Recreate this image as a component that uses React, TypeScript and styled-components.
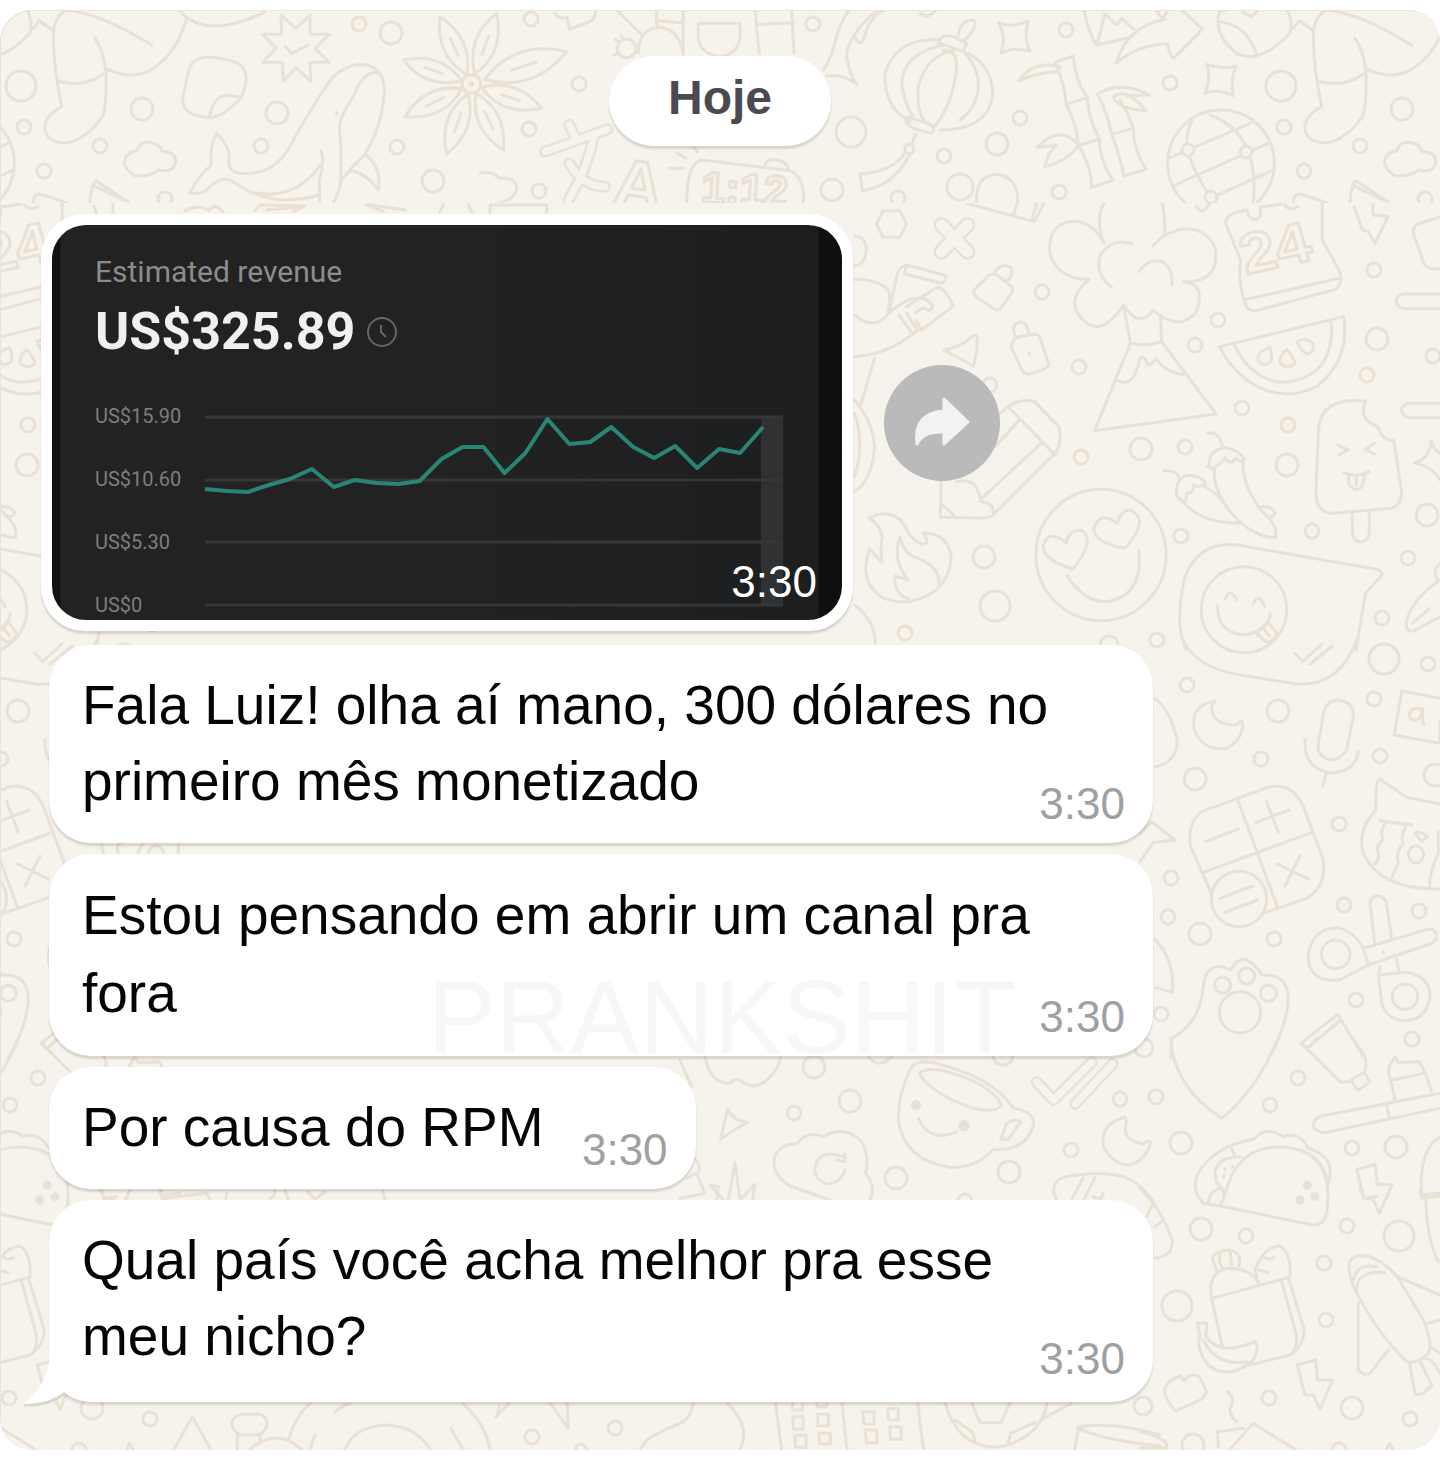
import React from "react";
import styled, { createGlobalStyle, css } from "styled-components";

const LINE = "#e9e1d4";
const PAPER = "#f6f2ec";

// [x, y, radius] of the small rings scattered between the doodles
const upperRings = [
  [21, 86, 15], [142, 109, 11], [24, 127, 7], [100, 146, 7], [44, 171, 7],
  [277, 113, 11], [261, 146, 7], [359, 24, 7], [391, 33, 11], [397, 147, 7],
  [433, 181, 11], [165, 199, 7], [531, 19, 7], [813, 24, 7], [579, 84, 7],
  [529, 129, 7], [539, 191, 7], [851, 132, 15], [944, 156, 7], [832, 190, 11],
  [898, 198, 7], [1066, 30, 7], [1170, 83, 7], [1020, 118, 7], [997, 144, 11],
  [1059, 192, 7], [960, 187, 13],
];

const lowerRings = [
  [1042, 292, 7], [1079, 367, 7], [1195, 345, 7], [1218, 320, 7], [1374, 270, 7],
  [1377, 339, 11], [1433, 356, 7], [1367, 375, 7], [1242, 408, 7], [1288, 425, 7],
  [1141, 449, 11], [1185, 447, 7], [1287, 465, 11], [1081, 457, 7], [984, 557, 11],
  [995, 606, 15], [905, 633, 7], [1181, 536, 7], [1312, 531, 7], [1427, 515, 11],
  [1408, 558, 7], [1382, 618, 7], [1157, 640, 7], [1109, 645, 9], [990, 385, 7],
  [1384, 659, 15], [1428, 664, 7], [1187, 685, 7], [1374, 699, 7], [1278, 711, 11],
  [1380, 756, 7], [1261, 759, 7], [1195, 779, 11], [1435, 775, 11], [1339, 824, 7],
  [1171, 878, 7], [1168, 917, 7], [1200, 934, 11], [1274, 939, 7], [1344, 905, 7],
  [1419, 911, 7], [1356, 1000, 7], [1161, 1014, 7], [1412, 1039, 7], [1144, 1048, 9],
  [814, 1067, 11], [850, 1101, 11], [794, 1113, 7], [1120, 1099, 7], [1156, 1097, 7],
  [1071, 1150, 7], [1009, 1172, 11], [896, 1178, 11], [965, 1201, 7], [1003, 1055, 10],
  [1298, 1078, 7], [1270, 1105, 7], [1181, 1143, 11], [1352, 1148, 7], [1396, 1147, 11],
  [1201, 1229, 11], [1246, 1236, 7], [1347, 1226, 7], [1399, 1236, 15], [1324, 1263, 7],
  [1177, 1306, 15], [1326, 1320, 7], [1269, 1398, 7], [1352, 1408, 11], [1410, 1419, 7],
  [1143, 1406, 9], [1193, 1445, 11], [1339, 1450, 7], [532, 1437, 7], [615, 1428, 7],
];

const petals = [
  [1320, 50], [1210, 180], [1215, 350], [1340, 462],
  [1490, 40], [1700, 155], [1625, 325], [1510, 450],
];

const revenue = [
  [0, 73], [22, 75], [43, 76], [64, 69], [85, 63], [107, 53], [129, 71], [150, 64],
  [172, 67], [194, 68], [215, 65], [237, 43], [258, 31], [279, 31], [300, 57],
  [321, 37], [343, 3], [365, 28], [386, 26], [407, 11], [429, 31], [450, 42],
  [471, 30], [493, 52], [515, 33], [536, 37], [559, 11],
];

const ticks = ["US$15.90", "US$10.60", "US$5.30", "US$0"];

type PatchProps = {
  x: number;
  y: number;
  w: number;
  h: number;
  box: string;
  d: string;
  children?: React.ReactNode;
};

const Patch = ({ x, y, w, h, box, d, children }: PatchProps) => (
  <svg x={x} y={y} width={w} height={h} viewBox={box} preserveAspectRatio="none" overflow="visible">
    {children}
    <path d={d} />
  </svg>
);

// A fat line with a hollow inside
const Hollow = ({ d, size }: { d: string; size: number }) => (
  <>
    <path d={d} style={{ strokeWidth: size }} />
    <path d={d} style={{ strokeWidth: size - 5, stroke: PAPER }} />
  </>
);

const Rings = ({ items }: { items: number[][] }) => (
  <>
    {items.map(([x, y, r]) => (
      <circle key={`${x}-${y}`} cx={x} cy={y} r={r} />
    ))}
  </>
);

const Flower = () => (
  <>
    {petals.map(([x, y]) => {
      const dx = x - 1414;
      const dy = y - 252;
      const mx = 1414 + dx * 0.55;
      const my = 252 + dy * 0.55;
      return (
        <path
          key={x}
          d={`M${1414 + dx * 0.14} ${252 + dy * 0.14} Q${mx - dy * 0.28} ${my + dx * 0.28} ${x} ${y}
            Q${mx + dy * 0.28} ${my - dx * 0.28} ${1414 + dx * 0.14} ${252 + dy * 0.14}
            M${1414 + dx * 0.42} ${252 + dy * 0.42} L${1414 + dx * 0.68} ${252 + dy * 0.68}`}
        />
      );
    })}
    <circle cx="1414" cy="252" r="28" fill={PAPER} />
    <circle cx="1414" cy="252" r="4" />
  </>
);

const UpperDoodles = () => (
  <>
    <Rings items={upperRings} />
    <Patch
      x={0} y={0} w={480} h={230} box="0 0 1440 690"
      d="M200 30Q160 50 160 110Q160 200 185 320Q130 350 135 390Q145 430 200 428Q260 420 310 345Q320 310 318 205
        M175 243Q250 265 310 222 M285 115Q310 150 316 205Q400 245 460 205Q530 160 560 55L540 32
        M200 30Q300 40 455 135 M562 53Q640 110 795 36
        M620 172Q575 175 565 215Q555 260 548 295Q545 345 620 352Q660 360 725 292Q740 250 738 230Q735 190 690 182Q650 170 620 172
        M628 352Q640 290 680 286L725 292
        M843 45L888 85L930 45V102L988 103L945 145L988 187H930L933 245L888 203L850 243L847 187H788L828 145L787 103L845 102Z
        M855 138L875 160L922 137
        M568 580Q600 520 632 498Q630 430 650 400Q690 440 688 475Q680 515 720 520Q830 530 880 420Q960 280 1000 230Q1050 185 1100 195Q1160 210 1152 290Q1145 380 1095 462Q1030 530 1022 545Q1020 570 1000 608
        M568 580Q610 585 630 560Q660 530 690 540Q780 600 860 600Q920 598 955 585 M770 578Q890 600 965 490
        M963 452Q975 480 958 540V608 M1135 218Q1090 210 1060 290Q1020 350 1018 380Q1025 450 1022 545
        M1095 462Q1145 500 1135 570Q1100 520 1055 512 M1010 338V342
        M405 528Q365 500 375 480Q380 455 410 452Q420 425 447 427Q480 430 487 455Q530 455 527 490Q515 520 475 510Q455 530 405 528Z
        M270 608Q272 560 287 542L385 606 M287 560L370 600 M100 608Q100 575 130 585L200 608"
    >
      <Flower />
    </Patch>
    <Patch
      x={480} y={0} w={480} h={230} box="0 0 1440 690"
      d="M225 40Q240 60 262 52L268 88L330 65Q345 55 348 36 M415 35L485 105 M475 160Q475 85 540 82Q600 90 610 165V32
        M530 80V32 M530 62L605 68 M468 145A28 28 0 1 1 412 145A28 28 0 1 1 468 145 M415 125L405 118 M412 160L402 165 M428 120L424 108
        M655 70H780V110Q775 165 717 170Q660 160 655 115Z M825 32L838 160 M935 32L942 160 M835 73L940 68
        M1105 32Q1070 90 1065 130Q1050 180 1030 210 M1190 32Q1100 110 1100 170Q1110 230 1132 255Q1090 220 1040 228
        M1125 110Q1140 150 1155 105Q1170 50 1210 32 M1320 40Q1340 60 1365 32
        M1380 120Q1250 110 1215 220Q1210 320 1290 365 M1390 135Q1270 160 1265 250Q1275 320 1300 350
        M1430 150Q1340 160 1315 260Q1310 340 1335 362 M1390 150Q1430 150 1430 200Q1420 310 1365 378
        M1375 128Q1385 100 1420 110L1460 130L1450 155L1380 130 M1280 350Q1270 370 1300 385L1355 400Q1370 385 1350 372Z
        M1465 160Q1540 200 1538 290Q1520 390 1380 390 M1455 160Q1510 220 1490 290Q1480 330 1440 360
        M1435 105Q1440 60 1480 60Q1500 75 1450 125 M1308 402L1295 430 M1302 447A14 14 0 1 1 1274 447A14 14 0 1 1 1302 447
        M1275 458Q1240 515 1140 522L1147 572Q1240 560 1290 462
        M620 608Q620 490 665 480L930 512Q975 530 970 608 M855 495Q860 475 890 480Q920 485 925 505
        M570 505H612 M590 458L618 475 M640 440L652 455
        M0 520Q30 510 60 535Q110 530 110 570Q100 600 60 608"
    >
      <Hollow size={12} d="M195 455L382 388M268 375L285 410M342 405Q325 500 265 602M268 490Q310 560 375 560" />
      <DoodleText x="395" y="615" fontSize="205" transform="rotate(8 400 600)">A</DoodleText>
      <DoodleText x="662" y="606" fontSize="130" transform="rotate(3 670 600)">1:12</DoodleText>
    </Patch>
    <Patch
      x={960} y={0} w={480} h={330} box="0 0 1440 990"
      d="M115 68Q160 85 205 63Q190 110 210 153Q160 140 123 160Q140 110 115 68Z
        M740 193Q785 210 828 198Q810 240 820 287Q775 265 735 280Q755 235 740 193Z
        M372 32Q390 110 410 135L500 115 M412 130L435 42L470 75L485 55L522 88
        M468 190Q500 80 615 58L600 48L590 32 M610 50L622 38 M665 32Q690 50 727 88L640 175Q625 160 625 132Q540 130 468 190
        M775 65Q770 30 800 30 M775 65Q770 110 830 160Q900 195 990 100Q1000 60 980 30 M775 65Q860 70 892 168 M848 35L875 52L892 32
        M1000 85L1018 62L1060 92
        M285 187L340 168Q345 240 382 293Q385 360 418 415Q420 490 460 540L395 562Q395 500 355 435Q350 370 318 313Q315 250 285 187
        M318 313L382 293 M355 437L418 417 M175 243Q220 180 300 200L295 215Q240 215 175 243
        M355 435Q300 370 232 442L290 435Q260 460 255 500Q330 480 355 435
        M412 283Q440 330 455 403Q480 470 492 528L558 508Q520 450 520 385Q500 330 480 300 M455 403L520 385
        M412 283Q480 240 568 285L500 288 M460 290Q500 260 558 333Q470 325 460 290
        M943 490A160 160 0 1 1 623 490A160 160 0 1 1 943 490
        M625 475L870 370 M645 555L925 430 M750 595L940 510 M750 345Q900 400 880 608 M695 365Q660 430 710 520Q730 560 750 590
        M50 610Q45 525 110 523Q175 530 173 608"
    >
    </Patch>
    <circle cx="1188" cy="150" r="6" fill={PAPER} />
    <circle cx="1246" cy="152" r="6" fill={PAPER} />
    <circle cx="1211" cy="197" r="6" fill={PAPER} />
  </>
);

const LowerDoodles = () => (
  <>
    <Rings items={lowerRings} />
    <Patch
      x={0} y={180} w={480} h={50} box="0 540 1440 150"
      d="M555 632Q600 610 625 632Q650 605 668 636 M765 632L780 615L915 617L880 635 M800 630L890 622
        M1098 614L1150 634 M1110 614L1215 630 M1320 636L1330 614 M1415 636L1405 614 M1470 640V615H1640V640"
    />
    <Patch
      x={850} y={200} w={590} h={450} box="0 0 1568 1350"
      d="M88 32H132L150 72L132 112H88L70 72Z M12 108Q45 110 43 155Q40 195 12 197
        M370 225Q382 218 392 226L430 260Q436 268 430 278L402 322Q392 335 380 325L335 290Q325 280 332 268Z M385 215Q400 190 425 200Q440 220 415 245
        M445 412L490 402Q500 402 505 415L528 490Q528 502 515 508L475 523Q465 524 458 512L430 445Q428 420 445 412Z M440 412Q425 370 455 365Q475 375 475 402 M477 460V466
        M250 450Q300 440 325 408Q338 400 338 415Q340 450 328 498Z
        M12 238Q90 240 105 280Q105 340 95 350Q60 390 12 345 M150 195L250 225Q262 235 245 250L145 222Z M150 195Q130 200 125 225L103 340
        M103 340Q160 280 205 300Q230 320 210 332Q190 315 175 340 M150 320L232 262Q250 260 275 318L190 390L175 360 M130 345L165 400 M150 340L180 392 M12 470Q100 465 175 395
        M65 475L30 610 M12 600Q60 660 65 740Q60 840 12 875 M12 640Q40 730 12 830
        M310 10L490 65L515 12 M435 45L445 5 M485 55L495 12
        M675 10Q650 60 675 130Q640 55 580 65Q520 85 533 170Q560 240 635 238Q580 290 605 340Q660 430 727 315Q770 390 805 330Q870 395 918 340Q950 250 885 245Q980 250 972 150Q950 80 880 88Q830 100 805 138
        M830 10Q840 60 835 100 M750 132Q700 110 665 165Q650 225 695 262 M768 215Q790 175 830 185Q860 205 855 255
        M727 315L745 430L650 692L973 642L828 425L825 345 M745 430Q790 440 828 425 M710 540Q755 570 770 475Q785 465 790 492Q800 500 812 475Q840 520 890 523
        M1055 30Q990 40 1000 75L1038 180Q1030 240 1050 310Q1055 335 1080 332L1290 268Q1310 250 1302 215L1255 120V8 M1055 298L1300 235
        M1055 30Q1060 60 1080 58Q1095 50 1090 22L1145 12 M1155 15Q1170 35 1190 20 M920 18Q935 50 955 12
        M1340 20L1362 90L1378 95L1395 130L1430 50L1390 45V10
        M1570 50L1510 72Q1490 85 1500 110L1525 190Q1535 212 1570 205
        M1570 282H1470Q1450 285 1452 305Q1455 325 1475 326H1570 M1570 610H1485Q1465 615 1466 632Q1470 652 1490 653H1570
        M983 440L1312 350Q1330 480 1240 560Q1150 610 1060 545Q1000 490 983 440Z M1020 432Q1060 530 1140 547Q1240 545 1270 460Q1285 400 1277 362
        M1115 443Q1080 455 1085 480Q1100 505 1118 485Q1125 465 1115 443Z M1160 448Q1140 470 1143 490Q1160 510 1182 492Q1180 470 1160 448Z M1188 425Q1210 410 1230 430Q1235 455 1215 463Q1195 450 1188 425Z
        M1370 603Q1250 590 1245 690L1238 880Q1240 940 1285 940L1440 925Q1470 910 1465 870L1445 720Q1415 725 1403 680Q1350 660 1370 603Z
        M1335 940V1000Q1340 1025 1358 1027Q1380 1020 1380 1000V935 M1297 735L1323 750L1299 765 M1395 730L1370 748L1395 762
        M1312 818Q1345 835 1380 815 M1325 825V850Q1335 870 1350 868Q1368 860 1366 822 M1346 830V855
        M1545 722Q1540 780 1500 788Q1550 800 1568 840 M1545 722Q1550 750 1570 760
        M400 640Q440 590 490 605L555 680Q565 730 545 760L380 945Q370 955 350 954L240 952L242 840 M420 620L545 765 M450 660L385 740 M510 728L350 895
        M283 845Q340 830 347 905Q380 905 382 940 M242 910L280 950
        M950 700Q980 690 990 740 M955 800Q950 750 1000 742Q1040 755 1048 778Q1040 790 1025 775Q1010 800 998 772Q985 790 975 798Q965 810 950 800
        M970 800Q960 850 1000 920Q1060 1010 1130 1013Q1140 980 1100 940Q1040 860 1045 780 M835 812Q870 810 875 835
        M868 870Q870 830 900 826Q940 830 945 852Q925 865 912 855Q915 880 895 880Q890 925 880 900Q865 890 868 870 M885 905Q930 970 1040 970 M935 855Q980 880 1000 920
        M1085 920Q1120 915 1130 940Q1120 955 1110 948
        M840 1065A173 197 0 1 1 494 1065A173 197 0 1 1 840 1065
        M593 1107Q510 1080 514 1035Q530 985 575 1030Q580 990 615 990Q655 1020 593 1107Z M730 1045Q650 1030 648 985Q665 930 710 970Q720 930 745 930Q800 960 730 1045Z
        M577 1127Q620 1205 680 1205Q780 1190 768 1053
        M50 955Q80 970 85 1010Q80 1050 85 1087L52 1047Q20 1150 90 1195Q160 1225 230 1170Q280 1110 265 1050Q250 1000 195 998Q215 1035 190 1032Q160 1020 145 975Q110 920 50 955Z
        M133 1010Q110 1080 155 1140L120 1128Q115 1180 155 1197 M133 1010Q140 1060 180 1075Q240 1100 237 1155
        M895 1350Q860 1280 890 1130Q930 1020 1030 1035L1400 1108Q1420 1115 1410 1130L1370 1180L1345 1350
        M1161 1229A114 129 0 1 1 933 1229A114 129 0 1 1 1161 1229 M998 1195Q1010 1160 1028 1200 M1073 1210Q1085 1175 1103 1220
        M977 1215Q975 1300 1050 1305Q1115 1290 1117 1240 M1080 1300L1110 1265L1135 1300Q1125 1330 1105 1325Z M1098 1285L1115 1308
        M1568 1140Q1490 1200 1478 1270Q1480 1300 1500 1292L1568 1250 M1495 1270L1540 1225 M1568 1090Q1545 1110 1562 1140
        M12 1215Q65 1260 68 1330"
    >
      <Hollow size={16} d="M243 75L312 155M312 75L243 155" />
      <DoodleText x="1052" y="222" fontSize="170" transform="rotate(-14 1060 220)">24</DoodleText>
    </Patch>
    <Patch
      x={1140} y={640} w={300} h={420} box="0 0 900 1260"
      d="M130 0Q165 80 290 103L470 132Q600 140 650 0 M465 40L488 65L545 12 M510 72L577 18
        M45 175Q90 210 112 300Q110 370 45 380
        M225 183Q150 195 163 270Q190 335 260 325Q310 300 308 245Q300 240 290 255Q215 255 215 200Z
        M550 220Q560 180 597 180Q645 190 640 230L620 330Q600 360 570 360Q530 350 535 310Z M495 298Q490 390 580 400Q650 390 655 332 M558 402L548 438
        M785 153L900 175 M785 153L763 285L900 310 M900 240V310
        M0 580L35 545L105 600L40 608L0 665
        M185 515L390 440Q460 430 490 500L550 660Q560 740 500 775L370 820 M214 760L152 620Q140 550 185 515 M295 485L412 800 M190 697L515 578
        M198 605L295 567 M347 548L447 510 M380 485L415 577 M412 672L505 717 M480 648L435 738 M240 775L337 738 M255 817L353 780
        M380 777A83 83 0 1 1 214 777A83 83 0 1 1 380 777
        M900 492L800 472L720 418Q705 420 708 510Q650 570 670 640Q720 750 900 747 M720 542L815 555 M738 548Q720 570 728 600Q705 620 715 640Q720 655 705 672
        M797 560Q780 590 790 610Q765 640 775 670Q765 690 755 712 M895 575V640Q870 690 868 740 M825 580Q840 570 862 590L845 605Z M851 643A23 26 0 1 1 805 643A23 26 0 1 1 851 643
        M690 790Q695 765 715 768Q738 770 740 795L755 895 M690 790L705 915 M670 925L865 867Q885 865 889 885Q890 905 870 912L685 975Z
        M685 975L600 1020Q500 1030 505 940Q520 865 590 863Q640 870 670 925 M720 980L715 1005 M770 958L778 1000
        M715 1005L800 997Q870 1010 870 1070Q860 1140 795 1142Q740 1140 725 1090Z
        M630 943A43 43 0 1 1 544 943A43 43 0 1 1 630 943 M833 1070A38 38 0 1 1 757 1070A38 38 0 1 1 833 1070 M730 935V938
        M45 898Q105 960 97 1057L48 1043
        M92 1255L95 1195Q180 1150 190 1040Q200 955 272 990Q310 920 365 1005Q445 1000 445 1080Q440 1160 385 1255
        M362 1117A62 62 0 1 1 238 1117A62 62 0 1 1 362 1117 M272 1035A24 24 0 1 1 224 1035A24 24 0 1 1 272 1035 M344 1008A24 24 0 1 1 296 1008A24 24 0 1 1 344 1008 M409 1060A24 24 0 1 1 361 1060A24 24 0 1 1 409 1060
        M515 1240L483 1210L593 1123L670 1250 M500 1225L603 1140
        M848 210Q815 195 808 225Q810 250 840 235L848 205V240L852 252"
    />
    <Patch
      x={680} y={1040} w={480} h={180} box="0 0 1440 540"
      d="M75 50Q90 130 150 130Q165 115 180 120Q220 155 260 120Q295 90 302 50 M0 60L35 140
        M143 205Q155 240 203 248Q165 265 122 298Z M565 50Q595 90 635 50
        M450 480L330 438Q270 400 285 350Q300 310 350 312Q380 270 430 290Q490 255 540 300Q570 340 557 400Q590 440 570 480
        M495 390Q480 430 445 432Q400 420 405 380Q420 325 490 350 M470 360L495 365V342
        M90 435L115 440L110 480 M90 435L130 480 M145 480L165 368L180 478 M185 475L225 432L218 480
        M0 475L75 460L50 400Q70 390 45 355 M20 415L50 400
        M690 90Q700 60 760 68Q940 110 1000 205Q1060 215 1062 250Q1040 335 940 328Q890 385 810 382Q670 360 655 240Q655 160 690 90Z
        M718 100Q740 80 800 95Q930 130 965 195Q950 220 880 205Q750 160 718 100Z M715 235Q750 310 830 275 M980 250Q1000 235 1022 245L985 298L962 298Z
        M1335 232Q1260 250 1270 320Q1300 375 1350 375Q1400 360 1412 305Q1400 300 1390 312Q1320 300 1340 245Z
        M1130 480Q1105 430 1150 412Q1250 390 1330 410Q1385 430 1420 485 M1175 478L1210 412 M1212 478L1245 412 M1240 470L1262 478L1270 460"
    >
      <circle cx="708" cy="195" r="11" fill={LINE} />
      <circle cx="852" cy="257" r="13" fill={LINE} />
      <Hollow size={12} d="M1070 127L1121 180L1235 67M1185 192L1298 72" />
    </Patch>
    <Patch
      x={1140} y={1040} w={300} h={420} box="0 0 900 1260"
      d="M92 -5Q100 140 245 235Q350 150 415 -5 M485 10L600 125Q625 130 640 115L672 97Q685 70 670 40L635 -10 M485 10L500 -5 M510 20L530 -5 M635 125L655 152L690 125L672 97
        M0 445Q60 500 97 600Q100 650 45 655 M40 490L20 530 M65 545L45 560
        M900 160L545 228Q515 240 522 262Q535 280 560 277L900 205 M740 192L748 235 M765 180L752 120Q735 85 765 52L775 68L835 65Q850 75 875 155 M752 120L810 110L858 98
        M190 490Q150 450 175 400Q220 320 340 298Q380 255 430 290Q480 275 505 325Q590 350 565 430
        M240 498L520 555Q560 555 562 500Q580 340 440 322Q310 310 265 430Q250 480 240 498L190 490 M275 325L285 350
        M300 350Q230 350 225 400Q225 430 245 445Q210 450 205 485 M245 445Q255 455 250 480 M480 330Q540 350 560 410
        M255 386V390 M252 406V410 M278 378V382
        M650 388L705 373L712 432L755 435L718 520L700 478L672 475Z M472 975L527 960L533 1020L578 1020L540 1108L520 1065L495 1065Z
        M900 290Q835 330 845 465L900 460 M857 467Q860 600 895 665
        M215 775Q200 700 260 685Q340 685 357 735 M215 775L445 713 M215 775L248 925 M445 713L493 870Q490 920 450 945L330 975 M425 725L468 880Q475 920 455 942
        M345 690Q370 620 420 618Q455 640 450 712 M345 690L355 730 M230 690L217 655Q220 635 270 630Q310 640 295 680 M240 645Q235 665 245 682 M270 635L275 675
        M370 650Q385 662 402 652 M355 690L385 698
        M172 850L200 850L198 890Q240 950 345 905Q360 920 340 960Q270 1020 210 980Q165 930 180 890Z M190 900Q230 980 320 965
        M630 665Q640 640 690 650Q740 670 775 715L850 840Q880 910 865 940Q840 970 800 965Q720 890 650 760Q620 700 630 665Z
        M650 750Q650 690 735 698 M640 720Q650 670 710 680 M655 790V990Q670 1010 690 1000L745 930 M775 712L900 765 M862 850L900 840
        M808 968L825 1060Q840 1075 875 1035L838 960 M840 960Q870 940 900 1000 M870 920L900 940
        M75 1045Q85 1020 120 1008L133 1022L145 1008Q175 1000 180 1015L200 1055Q195 1070 180 1080L110 1112Q100 1115 75 1065Z
        M262 1055Q290 1075 270 1105Q270 1130 290 1145
        M0 1175Q90 1195 80 1225H0 M235 1220L232 1175L310 1165 M270 1228L340 1150L465 1228 M740 1228L748 1210L760 1228"
    >
      <circle cx="502" cy="435" r="9" fill={LINE} />
      <circle cx="525" cy="470" r="9" fill={LINE} />
      <circle cx="479" cy="480" r="9" fill={LINE} />
    </Patch>
    <Patch
      x={0} y={1180} w={400} h={280} box="0 0 1200 840"
      d="M522 808L577 710L632 808 M695 730Q700 705 730 703H780Q805 710 800 740Q790 765 760 765H720Q695 750 695 730Z
        M712 765V808 M780 765V785 M750 808Q830 740 905 808 M865 780Q890 700 930 672 M1005 695Q1030 675 1050 672
        M1035 808Q1060 740 1160 735Q1250 740 1290 808 M930 808L945 765 M300 30L315 55L350 50 M380 55L390 30
        M480 30L485 55L620 40L630 58 M680 40L678 58 M810 55Q825 50 825 30 M855 30L865 58 M925 35L945 58L975 35 M1148 30L1155 60"
    />
    <Patch
      x={400} y={1360} w={760} h={100} box="0 0 1568 300"
      d="M130 130Q180 200 185 268 M198 170L225 130 M200 170L205 140 M310 130L347 205L345 130 M605 130Q600 180 570 195Q500 235 497 268
        M675 130Q725 200 702 268 M775 130L787 268 M912 130L922 268 M1068 130L1080 268 M105 205L130 268 M362 268Q370 235 386 268
        M810 130V150H830V130 M860 130V140H880V130 M810 170H832V208H812Z M862 162H884V198H862Z M814 226H838V262H816Z M864 220H888V252H866Z
        M955 155H978V192H957Z M1006 146H1028V180H1008Z M960 210H984V248H962Z M1010 200H1034V238H1012Z
        M1125 130Q1150 260 1230 262Q1320 240 1335 130 M1180 130L1197 188H1240L1258 130 M1385 130L1328 175 M1145 180L1180 215L1187 245 M1310 188L1260 220L1255 245
        M1400 200Q1480 185 1568 225 M1400 205Q1450 240 1568 258 M1400 200L1392 268"
    />
  </>
);

// The pattern repeats every 1260 units across
const Wallpaper = () => (
  <Doodles viewBox="0 10 1440 1440" preserveAspectRatio="xMidYMin slice" aria-hidden="true">
    <defs>
      <clipPath id="upper">
        <rect x="-1260" y="0" width="3960" height="203" />
      </clipPath>
      <clipPath id="lower">
        <rect x="-1260" y="203" width="3960" height="1260" />
      </clipPath>
      <g id="tile">
        <g clipPath="url(#upper)">
          <UpperDoodles />
        </g>
        <g clipPath="url(#lower)">
          <LowerDoodles />
        </g>
      </g>
    </defs>
    <use href="#tile" x="-1260" />
    <use href="#tile" />
    <use href="#tile" x="1260" />
  </Doodles>
);

const RevenueCard = () => (
  <Media>
    <Shot>
      <Caption>Estimated revenue</Caption>
      <Total>
        US$325.89
        <Clock viewBox="0 0 30 30" aria-hidden="true">
          <circle cx="15" cy="15" r="14" />
          <path d="M14 8V15L19 20" />
        </Clock>
      </Total>
      <Chart>
        <Ticks>
          {ticks.map((tick) => (
            <li key={tick}>{tick}</li>
          ))}
        </Ticks>
        <Plot viewBox="0 0 579 190" preserveAspectRatio="none">
          <rect x="557" y="1" width="22" height="189" fill="#303132" />
          <path d="M0 1H579M0 64H579M0 126H579M0 189H579" stroke="#363636" strokeWidth="3" />
          <polyline
            points={revenue.map(([x, y]) => `${x},${y}`).join(" ")}
            fill="none"
            stroke="#2a8577"
            strokeWidth="4"
            strokeLinejoin="round"
          />
        </Plot>
      </Chart>
      <ShotTime>3:30</ShotTime>
    </Shot>
  </Media>
);

type MessageProps = { children: React.ReactNode; roomy?: boolean; last?: boolean };

const Message = ({ children, roomy, last }: MessageProps) => (
  <Bubble $roomy={roomy} $last={last}>
    {last && (
      <Tail viewBox="0 0 46 60" aria-hidden="true">
        <path d="M0 58Q24 59 40 47" fill="none" stroke="#dad6cf" strokeWidth="3" />
        <path d="M25 0V12Q24 36 0 57Q24 57 40 45L46 20Z" fill="#fff" />
      </Tail>
    )}
    <Text>{children}</Text>
    <Time>3:30</Time>
  </Bubble>
);

const App = () => {
  return (
    <Page>
      <GlobalStyle />
      <Panel>
        <Wallpaper />
        <Day>Hoje</Day>
        <MediaRow>
          <RevenueCard />
          <Forward type="button" aria-label="Encaminhar">
            <svg viewBox="0 0 116 116" aria-hidden="true">
              <path d="M60 34L84 57L60 79V67Q39 66 33 79Q29 48 60 46Z" />
            </svg>
          </Forward>
        </MediaRow>
        <Messages>
          <Message>Fala Luiz! olha aí mano, 300 dólares no primeiro mês monetizado</Message>
          <Message roomy>Estou pensando em abrir um canal pra fora</Message>
          <Message>Por causa do RPM</Message>
          <Message last>Qual país você acha melhor pra esse meu nicho?</Message>
        </Messages>
        <Watermark>PRANKSHIT</Watermark>
      </Panel>
    </Page>
  );
};

export default App;

const GlobalStyle = createGlobalStyle`
  * {
    box-sizing: border-box;
  }

  body {
    margin: 0;
    background: #fff;
    font-family: "Liberation Sans", Arial, sans-serif;
  }
`;

const lift = css`
  box-shadow: 0 3px 2px rgba(60, 50, 40, 0.16);
`;

const Page = styled.div`
  padding: 10px 0;
`;

const Panel = styled.main`
  position: relative;
  overflow: hidden;
  padding: 46px 41px 48px;
  border-radius: 32px;
  background: ${PAPER};
  box-shadow: inset 1px 1px 0 #e6e5e3;
`;

const Doodles = styled.svg`
  position: absolute;
  inset: 0;
  width: 100%;
  height: 100%;

  path,
  circle,
  text {
    vector-effect: non-scaling-stroke;
    stroke: ${LINE};
    stroke-width: 3px;
    stroke-linecap: round;
    stroke-linejoin: round;
  }

  path,
  text {
    fill: none;
  }

  circle:not([fill]) {
    fill: none;
  }
`;

const DoodleText = styled.text`
  font-family: "Liberation Sans", Arial, sans-serif;
  font-weight: bold;
`;

const Day = styled.div`
  position: relative;
  width: fit-content;
  margin: 0 auto;
  padding: 0 59px 6px;
  border-radius: 45px;
  background: #fff;
  color: #4b4a50;
  font-size: 48px;
  font-weight: bold;
  line-height: 84px;
  ${lift}
`;

const MediaRow = styled.div`
  position: relative;
  display: flex;
  align-items: center;
  gap: 31px;
  margin-top: 68px;
`;

const Media = styled.div`
  width: 812px;
  padding: 11px;
  border-radius: 44px;
  background: #fff;
  ${lift}
`;

const Shot = styled.div`
  position: relative;
  height: 395px;
  overflow: hidden;
  padding: 29px 59px 0 43px;
  border-radius: 34px;
  background: linear-gradient(to right, #111213 8px, #222 9px, #222 50%, #1d1e20 765px, #0e0f11 768px);
  font-family: Roboto, sans-serif;
`;

const Caption = styled.div`
  color: #8c8c8e;
  font-size: 30px;
  line-height: 36px;
`;

const Total = styled.div`
  display: flex;
  align-items: center;
  gap: 12px;
  margin-top: 8px;
  color: #f0f0f0;
  font-size: 52px;
  font-weight: bold;
  line-height: 68px;
`;

const Clock = styled.svg`
  width: 30px;
  height: 30px;
  fill: none;
  stroke: #666;
  stroke-width: 2px;
`;

const Chart = styled.div`
  display: flex;
  align-items: center;
  margin-top: 38px;
`;

const Ticks = styled.ul`
  display: flex;
  flex-direction: column;
  gap: 39px;
  flex: 0 0 110px;
  margin: 0;
  padding: 0;
  list-style: none;
  color: #7d7d7f;
  font-size: 20px;
  line-height: 24px;
`;

const Plot = styled.svg`
  flex: 1;
  min-width: 0;
  height: 190px;
  overflow: visible;
`;

const ShotTime = styled.time`
  position: absolute;
  right: 25px;
  bottom: 14px;
  color: #fff;
  font-family: "Liberation Sans", Arial, sans-serif;
  font-size: 44px;
  line-height: 48px;
`;

const Forward = styled.button`
  flex: none;
  width: 116px;
  height: 116px;
  padding: 0;
  border: 0;
  border-radius: 50%;
  background: #bababa;

  svg {
    display: block;
    width: 100%;
  }

  path {
    fill: #f2f2f2;
    stroke: #f2f2f2;
    stroke-width: 3px;
    stroke-linejoin: round;
  }
`;

const Messages = styled.div`
  position: relative;
  display: flex;
  flex-direction: column;
  align-items: flex-start;
  gap: 11px;
  margin-top: 14px;
  padding-left: 8px;
`;

const Bubble = styled.div<{ $roomy?: boolean; $last?: boolean }>`
  position: relative;
  display: grid;
  max-width: 1104px;
  padding: 22px 28px ${({ $last }) => ($last ? 28 : 24)}px 33px;
  border-radius: 42px;
  background: #fff;
  line-height: ${({ $roomy }) => ($roomy ? 78 : 76)}px;
  ${lift}
`;

const Text = styled.p`
  grid-area: 1 / 1;
  margin: 0;
  padding-right: 40px;
  color: #050505;
  font-size: 55px;

  /* keeps the last line clear of the time */
  &::after {
    content: "";
    display: inline-block;
    width: 84px;
  }
`;

const Time = styled.time`
  grid-area: 1 / 1;
  align-self: end;
  justify-self: end;
  color: #a0a0a0;
  font-size: 44px;
  line-height: 30px;
`;

const Tail = styled.svg`
  position: absolute;
  left: -25px;
  bottom: -5px;
  width: 46px;
  height: 60px;
`;

const Watermark = styled.div`
  position: absolute;
  top: 960px;
  left: 4px;
  right: 0;
  color: rgba(0, 0, 0, 0.03);
  font-size: 103px;
  line-height: 96px;
  text-align: center;
  pointer-events: none;
`;
